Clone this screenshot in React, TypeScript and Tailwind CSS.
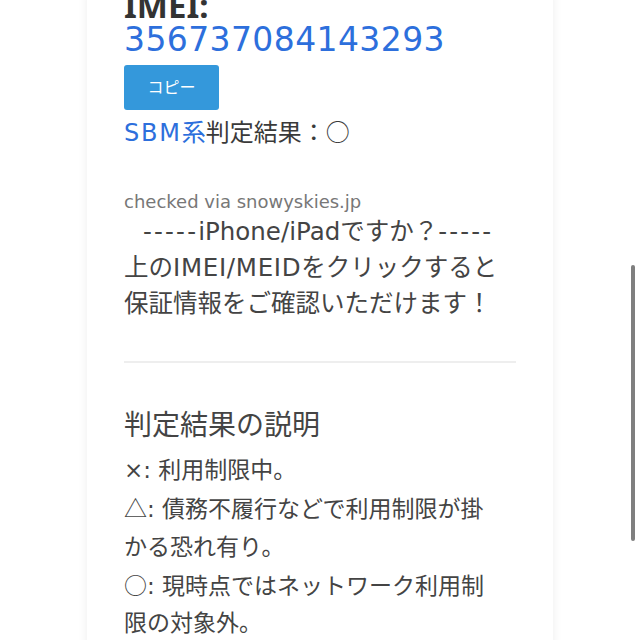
function ScrollIndicator() {
  return <div className="absolute left-[631px] top-[265px] h-[276px] w-[4px] rounded-full bg-[#7f7f7f]" />;
}

function Mark({ c }: { c: string }) {
  return <span className="[font-family:'Noto_Sans_CJK_JP',sans-serif]">{c}</span>;
}

function ImeiBlock() {
  return (
    <div>
      <h2 className="text-[33px] font-bold leading-[30px] text-[#333] [font-family:'Noto_Sans',sans-serif]">IMEI:</h2>
      <a className="block text-[33px] leading-[38px] tracking-[0.4px] text-[#2d6fdc]">356737084143293</a>
      <button className="mt-[6px] flex h-[45px] w-[95px] items-center justify-center rounded-[3px] bg-[#3498db] text-[16px] text-white">
        コピー
      </button>
      <p className="mt-[3px] text-[24px] leading-[36px] text-[#3a3a3a]">
        <span className="tracking-[1.8px] text-[#2d6fdc]">SBM</span>
        <span className="text-[#2d6fdc]">系</span>判定結果：<Mark c="○" />
      </p>
    </div>
  );
}

function Notice() {
  return (
    <div className="mt-[39px]">
      <p className="text-[18px] leading-[24px] text-[#777]">checked via snowyskies.jp</p>
      <p className="text-[24.5px] leading-[36px] text-[#444]">
        <span className="inline-block w-[19px]" />
        <span className="tracking-[2.2px]">-----</span>iPhone/iPadですか？<span className="tracking-[2.2px]">-----</span>
        <br />
        上の<span className="tracking-[0.7px]">IMEI/MEID</span>をクリックすると
        <br />
        保証情報をご確認いただけます！
      </p>
    </div>
  );
}

function Legend() {
  const rows: [string, string][] = [
    ['×', ': 利用制限中。'],
    ['△', ': 債務不履行などで利用制限が掛'],
    ['', 'かる恐れ有り。'],
    ['○', ': 現時点ではネットワーク利用制'],
    ['', '限の対象外。'],
  ];
  return (
    <div className="mt-[43px]">
      <h3 className="text-[28px] leading-[40px] text-[#444]">判定結果の説明</h3>
      <div className="mt-[6px] text-[23px] leading-[37.3px] text-[#444]">
        {rows.map(([m, r]) => (
          <div key={r}>
            {m === '×' ? m : m && <Mark c={m} />}
            {r}
          </div>
        ))}
      </div>
    </div>
  );
}

export default function App() {
  return (
    <div className="relative h-[640px] overflow-hidden bg-white [font-family:'DejaVu_Sans','Noto_Sans_CJK_JP',sans-serif]">
      <div className="mx-auto min-h-[700px] w-[466px] bg-white shadow-[0_0_10px_rgba(0,0,0,0.07)]">
        <div className="-mt-[9px] px-[37px]">
          <ImeiBlock />
          <Notice />
          <hr className="mt-[39px] border-0 border-t-2 border-[#eee]" />
          <Legend />
        </div>
      </div>
      <ScrollIndicator />
    </div>
  );
}
